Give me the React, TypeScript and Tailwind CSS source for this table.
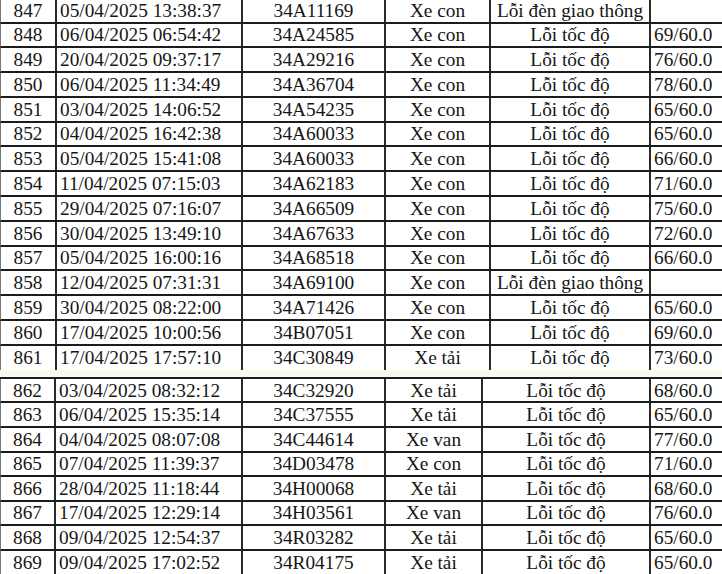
type Rec = [string, string, string, string, string, string];

const upper: Rec[] = [
  ["847", "05/04/2025 13:38:37", "34A11169", "Xe con", "Lỗi đèn giao thông", ""],
  ["848", "06/04/2025 06:54:42", "34A24585", "Xe con", "Lỗi tốc độ", "69/60.0"],
  ["849", "20/04/2025 09:37:17", "34A29216", "Xe con", "Lỗi tốc độ", "76/60.0"],
  ["850", "06/04/2025 11:34:49", "34A36704", "Xe con", "Lỗi tốc độ", "78/60.0"],
  ["851", "03/04/2025 14:06:52", "34A54235", "Xe con", "Lỗi tốc độ", "65/60.0"],
  ["852", "04/04/2025 16:42:38", "34A60033", "Xe con", "Lỗi tốc độ", "65/60.0"],
  ["853", "05/04/2025 15:41:08", "34A60033", "Xe con", "Lỗi tốc độ", "66/60.0"],
  ["854", "11/04/2025 07:15:03", "34A62183", "Xe con", "Lỗi tốc độ", "71/60.0"],
  ["855", "29/04/2025 07:16:07", "34A66509", "Xe con", "Lỗi tốc độ", "75/60.0"],
  ["856", "30/04/2025 13:49:10", "34A67633", "Xe con", "Lỗi tốc độ", "72/60.0"],
  ["857", "05/04/2025 16:00:16", "34A68518", "Xe con", "Lỗi tốc độ", "66/60.0"],
  ["858", "12/04/2025 07:31:31", "34A69100", "Xe con", "Lỗi đèn giao thông", ""],
  ["859", "30/04/2025 08:22:00", "34A71426", "Xe con", "Lỗi tốc độ", "65/60.0"],
  ["860", "17/04/2025 10:00:56", "34B07051", "Xe con", "Lỗi tốc độ", "69/60.0"],
];

const lastUpper: Rec = ["861", "17/04/2025 17:57:10", "34C30849", "Xe tải", "Lỗi tốc độ", "73/60.0"];

const lower: Rec[] = [
  ["862", "03/04/2025 08:32:12", "34C32920", "Xe tải", "Lỗi tốc độ", "68/60.0"],
  ["863", "06/04/2025 15:35:14", "34C37555", "Xe tải", "Lỗi tốc độ", "65/60.0"],
  ["864", "04/04/2025 08:07:08", "34C44614", "Xe van", "Lỗi tốc độ", "77/60.0"],
  ["865", "07/04/2025 11:39:37", "34D03478", "Xe con", "Lỗi tốc độ", "71/60.0"],
  ["866", "28/04/2025 11:18:44", "34H00068", "Xe tải", "Lỗi tốc độ", "68/60.0"],
  ["867", "17/04/2025 12:29:14", "34H03561", "Xe van", "Lỗi tốc độ", "76/60.0"],
  ["868", "09/04/2025 12:54:37", "34R03282", "Xe tải", "Lỗi tốc độ", "65/60.0"],
  ["869", "09/04/2025 17:02:52", "34R04175", "Xe tải", "Lỗi tốc độ", "65/60.0"],
];

const cell = "flex items-center border-r-2 border-[#2a2a2a] h-full";

function Row({ r, cols, className }: { r: Rec; cols: string; className: string }) {
  return (
    <div className={`grid ${cols} border-l border-[#777] ${className}`}>
      <div className={`${cell} justify-center`}>{r[0]}</div>
      <div className={`${cell} pl-[3px]`}>{r[1]}</div>
      <div className={`${cell} justify-center`}>{r[2]}</div>
      <div className={`${cell} justify-center`}>{r[3]}</div>
      <div className={`${cell} justify-center whitespace-nowrap`}>{r[4]}</div>
      <div className="flex items-center h-full pl-[3px]">{r[5]}</div>
    </div>
  );
}

export default function App() {
  const upCols = "grid-cols-[56px_186px_143px_105px_160px_1fr]";
  const lowCols = "grid-cols-[55px_187px_143px_97px_168px_1fr]";
  return (
    <div className="w-[722px] h-[574px] overflow-hidden bg-white text-[#161616] font-['Liberation_Serif',serif] text-[19.3px] leading-none">
      <div>
        {upper.map((r, i) => (
          <Row
            key={r[0]}
            r={r}
            cols={upCols}
            className={`border-b-2 border-b-[#1c1c1c] ${i === 0 ? "h-[23.5px]" : "h-[24.8px]"}`}
          />
        ))}
        <Row r={lastUpper} cols={upCols} className="h-[24px]" />
      </div>
      <div className="h-[7px] bg-[#fbf9ee]" />
      <div className="border-t-2 border-[#1c1c1c]">
        {lower.map((r) => (
          <Row key={r[0]} r={r} cols={lowCols} className="h-[24.6px] border-b-2 border-b-[#1c1c1c]" />
        ))}
      </div>
    </div>
  );
}
